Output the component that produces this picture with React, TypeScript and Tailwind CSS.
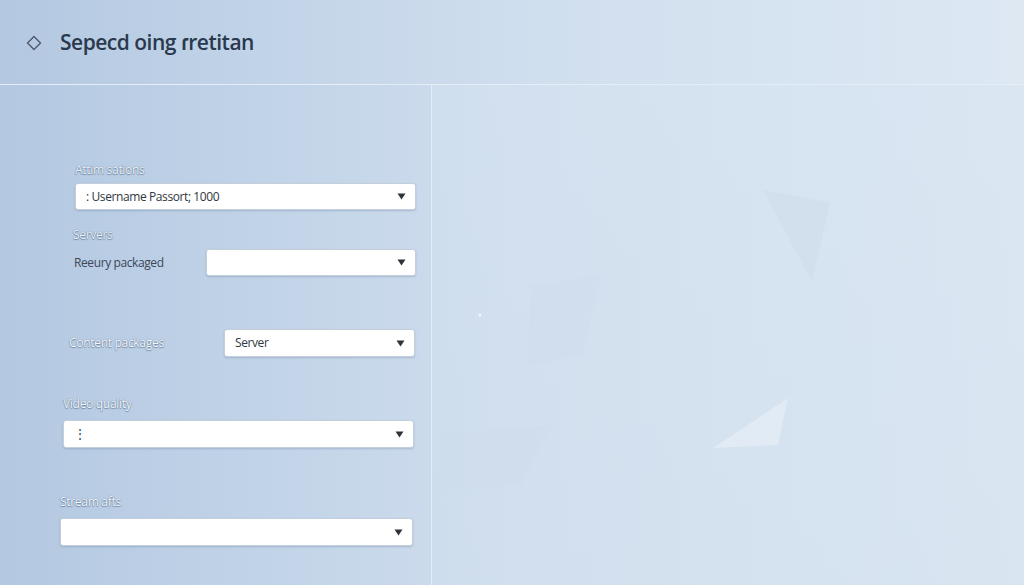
import React from 'react';

const FONT = "font-['Open_Sans','Noto_Sans',sans-serif]";

function Caret() {
  return (
    <svg width="9" height="7" viewBox="0 0 9 7" className="shrink-0">
      <path d="M0.5 0.5h8L4.5 6.5z" fill="#2f3338" />
    </svg>
  );
}

function Select({ value, className }: { value?: string; className: string }) {
  return (
    <div
      className={`flex items-center justify-between rounded-[3px] border border-[#c4cfdb] bg-white pl-[10px] pr-[9px] shadow-[0_1px_2px_rgba(70,95,130,0.25)] ${className}`}
    >
      <span className="text-[12px] leading-4 tracking-[-0.4px] text-[#2e3742]">{value}</span>
      <Caret />
    </div>
  );
}

const soft = '[text-shadow:0_0_1px_rgba(60,85,120,0.8),0_1px_1px_rgba(60,85,120,0.5)]';

export default function App() {
  return (
    <div
      className={`${FONT} w-[1024px] h-[585px] overflow-hidden flex flex-col bg-gradient-to-r from-[#b3c8e1] via-[#cfdeee] to-[#dde8f3]`}
    >
      {/* Header */}
      <div className="h-[85px] shrink-0 flex items-center border-b border-[#e5edf6] pt-[1px]">
        <svg width="16" height="16" viewBox="0 0 16 16" className="ml-[26px]">
          <path d="M8 1.5L14.5 8L8 14.5L1.5 8Z" fill="none" stroke="#4d5868" strokeWidth="1.3" />
        </svg>
        <h1 className="ml-[18px] text-[21px] font-semibold tracking-[-0.5px] text-[#2a394d]">
          Sepecd oing ɾretitan
        </h1>
      </div>

      {/* Body */}
      <div className="flex flex-1 min-h-0">
        <div className="w-[432px] shrink-0 border-r border-[#e3ebf5] flex flex-col pt-[77px]">
          <label className={`ml-[75px] text-[12px] leading-4 tracking-[-0.3px] text-[#eef3f9] ${soft}`}>Attim sations</label>
          <Select value=": Username Passort; 1000" className="ml-[75px] mt-[5px] w-[341px] h-[27px]" />

          <label className={`ml-[73px] mt-[17px] text-[12px] leading-4 tracking-[-0.3px] text-[#e8eff7] ${soft}`}>Servers</label>
          <div className="mt-[6px] flex items-center">
            <span className="ml-[74px] w-[132px] text-[12px] leading-4 tracking-[-0.4px] text-[#3c4857]">Reeury packaged</span>
            <Select className="w-[210px] h-[27px]" />
          </div>

          <div className="mt-[53px] flex items-center">
            <span className={`ml-[69px] w-[155px] text-[12px] leading-4 tracking-[-0.3px] text-[#f4f7fb] ${soft}`}>Content packages</span>
            <Select value="Server" className="w-[191px] h-[28px]" />
          </div>

          <label className={`ml-[63px] mt-[39px] text-[12px] leading-4 tracking-[-0.3px] text-[#f3f6fb] ${soft}`}>Video quality</label>
          <Select value="⋮" className="ml-[63px] mt-[8px] w-[351px] h-[28px]" />

          <label className={`ml-[60px] mt-[46px] text-[12px] leading-4 tracking-[-0.3px] text-[#f3f6fb] ${soft}`}>Stream afts</label>
          <Select className="ml-[60px] mt-[8px] w-[353px] h-[28px]" />
        </div>

        {/* Right panel with faint background shards */}
        <div className="flex-1 bg-gradient-to-b from-[#d7e4f1]/40 to-[#d3e0ee]/40">
          <svg width="592" height="500" viewBox="0 0 592 500" className="block">
            <path d="M331 105L398 118L380 197Z" fill="#c7d6e7" opacity="0.3" />
            <path d="M356 313L346 360L281 363Z" fill="#eef4fa" opacity="0.5" />
            <path d="M100 200L170 190L150 270L95 280Z" fill="#cbd9e9" opacity="0.18" />
            <path d="M8 350L120 340L90 400L10 405Z" fill="#cbd9e9" opacity="0.15" />
            <circle cx="48" cy="230" r="1.5" fill="#f3f7fb" />
          </svg>
        </div>
      </div>
    </div>
  );
}
